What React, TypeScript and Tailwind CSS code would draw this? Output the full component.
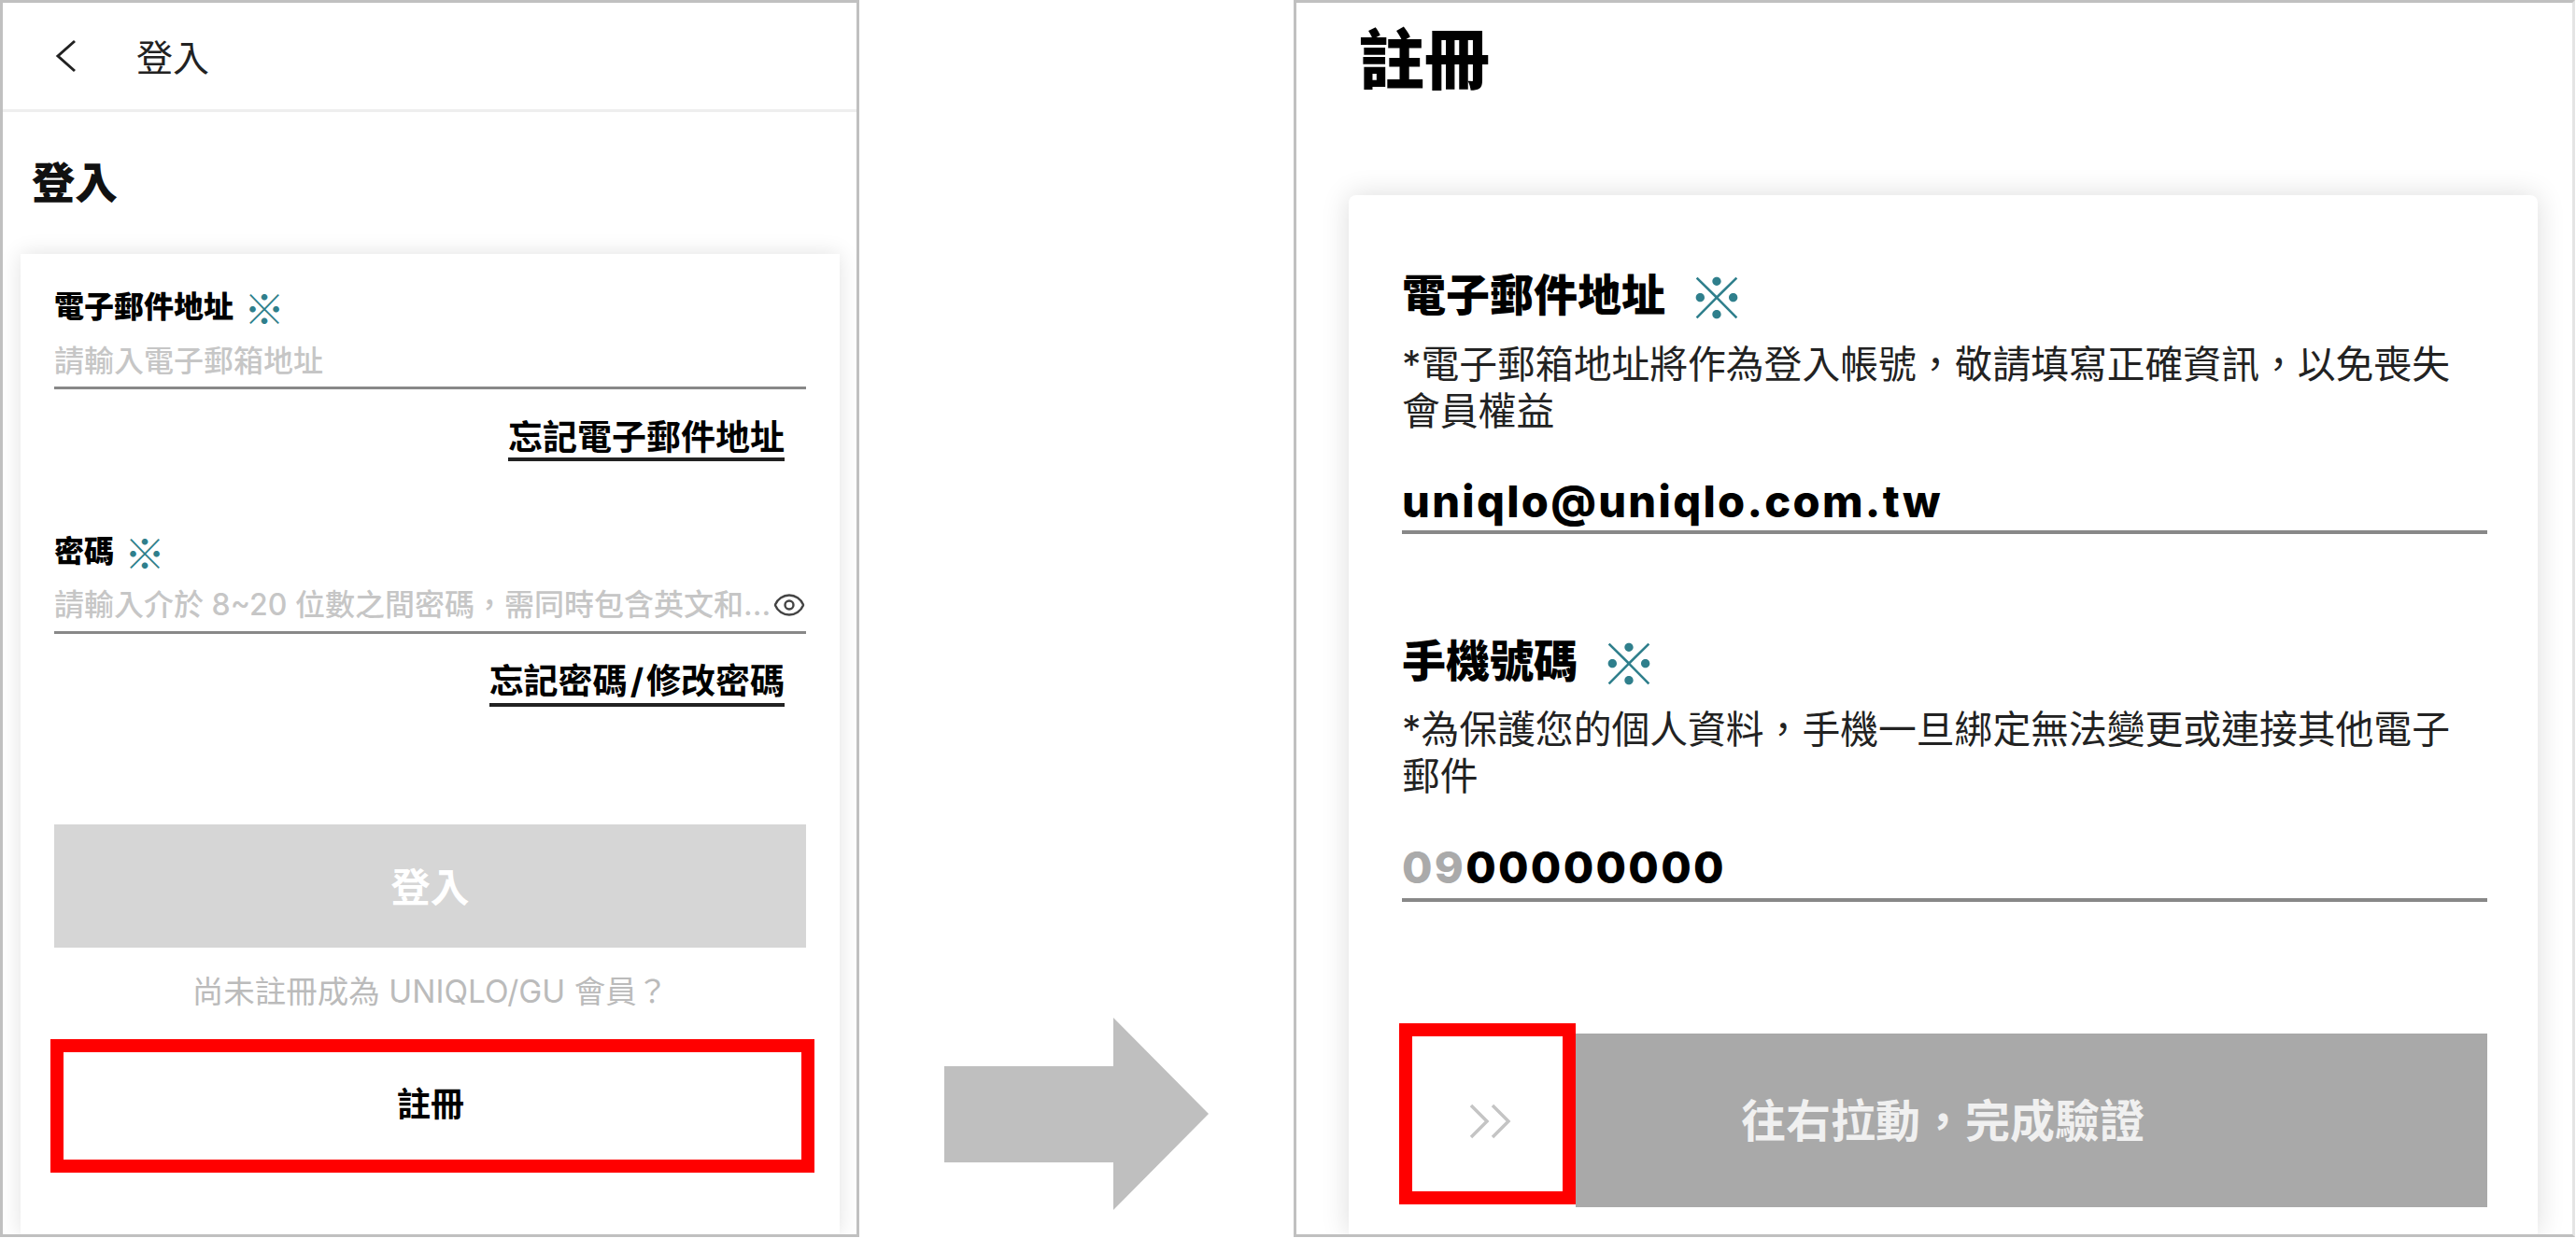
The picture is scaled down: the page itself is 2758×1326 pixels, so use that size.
import { Eye } from 'lucide-react';

const FONT = "font-['Inter','Noto_Sans_CJK_TC','Noto_Sans',sans-serif]";

const Required = ({ className }: { className: string }) => (
    <span className={`font-['Noto_Sans_CJK_TC',sans-serif] font-normal text-[#2f7f8c] ${className}`}>※</span>
);

const LoginPanel = () => (
    <div className="w-[920px] h-[1325px] shrink-0 border-[3px] border-[#c0c0c0] flex flex-col overflow-hidden">
        {/* Top bar */}
        <div className="h-[117px] shrink-0 border-b-[3px] border-[#eeeeee] flex items-center pl-[55px]">
            <svg width="25" height="36" viewBox="0 0 25 36" fill="none" stroke="#222222" strokeWidth="3">
                <path d="M22 2L4 18l18 16" />
            </svg>
            <span className="ml-[63px] mt-[3px] text-[39px] leading-[50px] text-[#222222]">登入</span>
        </div>

        <h2 className="mt-[45px] ml-[31px] text-[46px] leading-[60px] font-black text-[#111111]">登入</h2>

        {/* Form card */}
        <div className="mt-[47px] ml-[19px] w-[877px] flex-1 bg-white shadow-[0_0_22px_rgba(0,0,0,0.12)] px-[36px] pt-[37px]">
            <div className="flex items-center text-[32px] leading-[40px] font-black text-black">
                電子郵件地址
                <Required className="ml-[11px] text-[44px]" />
            </div>
            <div className="mt-[18px] pb-[7px] border-b-[3px] border-[#888888] text-[32px] leading-[40px] font-medium text-[#c6c6c6]">
                請輸入電子郵箱地址
            </div>
            <div className="flex justify-end mr-[23px] mt-[32px]">
                <span className="pb-[1px] border-b-[4px] border-[#222222] text-[37px] leading-[40px] font-bold text-black">
                    忘記電子郵件地址
                </span>
            </div>

            <div className="mt-[77px] flex items-center text-[32px] leading-[40px] font-black text-black">
                密碼
                <Required className="ml-[11px] text-[44px]" />
            </div>
            <div className="mt-[17px] pb-[8px] border-b-[3px] border-[#888888] flex items-center justify-between text-[32px] leading-[40px] font-medium text-[#c6c6c6]">
                <span className="whitespace-nowrap">請輸入介於 8~20 位數之間密碼，需同時包含英文和...</span>
                <Eye className="w-[36px] h-[36px] shrink-0 text-[#444444]" strokeWidth={1.6} />
            </div>
            <div className="flex justify-end mr-[23px] mt-[31px]">
                <span className="pb-[3px] border-b-[4px] border-[#222222] text-[37px] leading-[40px] font-bold text-black">
                    忘記密碼<span className="mx-[3px]">/</span>修改密碼
                </span>
            </div>

            <div className="mt-[126px] h-[132px] bg-[#d6d6d6] flex items-center justify-center pt-[2px] text-[42px] font-bold text-white">
                登入
            </div>
            <p className="mt-[27px] text-center text-[33.5px] leading-[40px] text-[#bbbbbb]">
                尚未註冊成為 UNIQLO/GU 會員？
            </p>
            <div className="mt-[31px] -ml-[4px] w-[818px] h-[143px] border-[14px] border-[#ff0000] flex items-center justify-center pb-[3px] pr-[4px] text-[36px] font-bold text-black">
                註冊
            </div>
        </div>
    </div>
);

const RegisterPanel = () => (
    <div className="ml-[91px] w-[1372px] h-[1325px] shrink-0 border-[3px] border-[#c0c0c0] border-r-[#e4e4e4] flex flex-col overflow-hidden">
        <h1 className="mt-[22px] ml-[67px] text-[70px] leading-[80px] font-black text-black">註冊</h1>

        <div className="mt-[104px] ml-[56px] w-[1273px] flex-1 bg-white rounded-t-lg shadow-[0_0_30px_rgba(0,0,0,0.14)] pl-[57px] pr-[54px] pt-[77px]">
            <div className="flex items-center text-[47px] leading-[60px] font-black text-black">
                電子郵件地址
                <Required className="ml-[24px] text-[62px]" />
            </div>
            <p className="mt-[19px] text-[40.8px] leading-[50px] text-[#222222] whitespace-nowrap">
                *電子郵箱地址將作為登入帳號，敬請填寫正確資訊，以免喪失
                <br />
                會員權益
            </p>
            <div className="mt-[42px] pb-[1px] border-b-[4px] border-[#888888] text-[47px] leading-[60px] font-extrabold tracking-[2.3px] text-black">
                uniqlo@uniqlo.com.tw
            </div>

            <div className="mt-[106px] flex items-center text-[47px] leading-[60px] font-black text-black">
                手機號碼
                <Required className="ml-[24px] text-[62px]" />
            </div>
            <p className="mt-[18px] text-[40.8px] leading-[50px] text-[#222222] whitespace-nowrap">
                *為保護您的個人資料，手機一旦綁定無法變更或連接其他電子
                <br />
                郵件
            </p>
            <div className="mt-[43px] pb-[3px] border-b-[4px] border-[#888888] text-[47px] leading-[60px] font-extrabold tracking-[2.3px] text-black">
                <span className="text-[#aaaaaa]">09</span>00000000
            </div>

            {/* Slide to verify */}
            <div className="mt-[130px] -ml-[3px] flex items-start">
                <div className="w-[189px] h-[194px] shrink-0 border-[14px] border-[#ff0000] flex items-center justify-center pt-[16px] pl-[6px]">
                    <svg width="48" height="38" viewBox="0 0 48 38" fill="none" stroke="#c4c4c4" strokeWidth="3.5">
                        <path d="M3 2l17 17L3 36" />
                        <path d="M26 2l17 17-17 17" />
                    </svg>
                </div>
                <div className="mt-[11px] w-[977px] h-[186px] bg-[#a9a9a9] flex items-center pl-[177px] pt-[2px] text-[48px] font-bold text-[#f0f0f0] whitespace-nowrap">
                    往右拉動，完成驗證
                </div>
            </div>
        </div>
    </div>
);

export default function App() {
    return (
        <div className={`w-[2758px] h-[1326px] bg-white flex items-start overflow-hidden ${FONT}`}>
            <LoginPanel />
            <svg className="ml-[91px] mt-[1090px] shrink-0" width="283" height="206" viewBox="0 0 283 206">
                <polygon points="0,52 181,52 181,0 283,103 181,206 181,155 0,155" fill="#bfbfbf" />
            </svg>
            <RegisterPanel />
        </div>
    );
}
